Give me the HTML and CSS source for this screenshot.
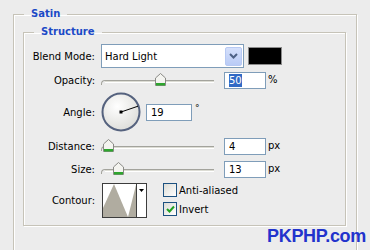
FILE: index.html
```html
<!DOCTYPE html>
<html lang="en">
<head>
    <meta charset="UTF-8">
    <title>Layer Style - Satin</title>
    <link rel="stylesheet" href="styles.css">
</head>
<body>
    <div class="dialog">
        <fieldset class="group outer">
            <legend>Satin</legend>
            <fieldset class="group inner">
                <legend>Structure</legend>

                <div class="row row-blend">
                    <label class="lbl">Blend Mode:</label>
                    <div class="select">
                        <span>Hard Light</span>
                        <span class="drop">
                            <svg width="9" height="6" viewBox="0 0 9 6"><polyline points="1,1 4.5,4.5 8,1" fill="none" stroke="#4d6185" stroke-width="2"/></svg>
                        </span>
                    </div>
                    <div class="swatch"></div>
                </div>

                <div class="row row-opacity">
                    <label class="lbl">Opacity:</label>
                    <div class="slider">
                        <div class="track"></div>
                        <svg class="thumb" style="left: 54px" width="11" height="13" viewBox="0 0 11 13"><path d="M0.5,5 L5.5,0.5 L10.5,5 L10.5,12.5 L0.5,12.5 Z" fill="#f4f4f0" stroke="#8a8a86"/><rect x="1" y="10" width="9" height="2.5" fill="#2ea52e"/></svg>
                    </div>
                    <div class="field"><span class="hilite">50</span></div>
                    <span class="unit">%</span>
                </div>

                <div class="row row-angle">
                    <label class="lbl">Angle:</label>
                    <svg class="dial" width="40" height="40" viewBox="0 0 40 40">
                        <defs>
                            <radialGradient id="dialFill" cx="0.4" cy="0.35" r="0.7">
                                <stop offset="0" stop-color="#ffffff"/>
                                <stop offset="1" stop-color="#dcdcd8"/>
                            </radialGradient>
                        </defs>
                        <circle cx="20" cy="20" r="18.5" fill="url(#dialFill)" stroke="#55627e" stroke-width="2"/>
                        <line x1="20" y1="20" x2="37" y2="14.2" stroke="#000" stroke-width="1"/>
                        <rect x="18.5" y="18.5" width="3" height="3" fill="#000"/>
                    </svg>
                    <div class="field field-angle">19</div>
                    <span class="deg">°</span>
                </div>

                <div class="row row-distance">
                    <label class="lbl">Distance:</label>
                    <div class="slider">
                        <div class="track"></div>
                        <svg class="thumb" style="left: 2px" width="11" height="13" viewBox="0 0 11 13"><path d="M0.5,5 L5.5,0.5 L10.5,5 L10.5,12.5 L0.5,12.5 Z" fill="#f4f4f0" stroke="#8a8a86"/><rect x="1" y="10" width="9" height="2.5" fill="#2ea52e"/></svg>
                    </div>
                    <div class="field">4</div>
                    <span class="unit">px</span>
                </div>

                <div class="row row-size">
                    <label class="lbl">Size:</label>
                    <div class="slider">
                        <div class="track"></div>
                        <svg class="thumb" style="left: 12px" width="11" height="13" viewBox="0 0 11 13"><path d="M0.5,5 L5.5,0.5 L10.5,5 L10.5,12.5 L0.5,12.5 Z" fill="#f4f4f0" stroke="#8a8a86"/><rect x="1" y="10" width="9" height="2.5" fill="#2ea52e"/></svg>
                    </div>
                    <div class="field">13</div>
                    <span class="unit">px</span>
                </div>

                <div class="row row-contour">
                    <label class="lbl">Contour:</label>
                    <div class="contour">
                        <svg class="curve" width="33" height="33" viewBox="0 0 33 33">
                            <rect width="33" height="33" fill="#fff"/>
                            <polygon points="0,33 0,24 11,0 25,33" fill="#b0aca0"/>
                            <polygon points="25,33 33,1 33,33" fill="#b0aca0"/>
                        </svg>
                        <span class="contour-drop">
                            <svg width="5" height="3" viewBox="0 0 5 3"><polygon points="0,0 5,0 2.5,3" fill="#000"/></svg>
                        </span>
                    </div>
                    <div class="checks">
                        <div class="check-row">
                            <span class="box"></span>
                            <span>Anti-aliased</span>
                        </div>
                        <div class="check-row">
                            <span class="box">
                                <svg width="11" height="11" viewBox="0 0 11 11"><polyline points="2,5 4.5,7.5 9,2.5" fill="none" stroke="#21a121" stroke-width="2"/></svg>
                            </span>
                            <span>Invert</span>
                        </div>
                    </div>
                </div>
            </fieldset>
        </fieldset>
        <div class="watermark">PKPHP.com</div>
    </div>
</body>
</html>
```

FILE: styles.css
```css
body {
    margin: 0;
    background: #ececec;
    font-family: 'DejaVu Sans', sans-serif;
    font-size: 10px;
    color: #000;
    overflow: hidden;
}

.dialog {
    position: relative;
    width: 370px;
    height: 250px;
    padding-top: 8px;
    box-sizing: border-box;
    overflow: hidden;
}

.group {
    margin: 0;
    padding: 0;
    border: 1px solid #c6c3b8;
    box-shadow: inset 1px 1px 0 #fff, 1px 1px 0 #fff;
    min-width: 0;
}

.group legend {
    color: #1c4ac6;
    font-weight: bold;
    font-size: 10px;
    margin-left: 10px;
    padding: 0 7px;
    line-height: 12px;
}

.outer {
    margin-left: 13px;
    width: 344px;
    box-sizing: border-box;
    height: 252px;
}

.inner {
    margin: 6px 10px 0 9px;
    padding-bottom: 7px;
}

/* rows */
.row {
    display: flex;
    align-items: center;
}

.lbl {
    width: 71px;
    margin-right: 6px;
    text-align: right;
    flex: none;
}

.row-blend { height: 24px; margin-top: 6px; }
.row-opacity { height: 19px; margin-top: 3px; }
.row-angle { height: 40px; margin-top: 2px; }
.row-distance { height: 19px; margin-top: 5px; }
.row-size { height: 19px; margin-top: 4px; }
.row-contour { height: 35px; margin-top: 4px; }

/* blend mode select */
.select {
    width: 143px;
    height: 24px;
    box-sizing: border-box;
    border: 1px solid #7f9db9;
    background: #fff;
    display: flex;
    align-items: center;
    justify-content: space-between;
    padding: 0 1px 0 3px;
}

.drop {
    width: 17px;
    height: 19px;
    box-sizing: border-box;
    border: 1px solid #b7c9f3;
    border-radius: 2px;
    background: linear-gradient(#d5e0fb, #b9cbf6);
    display: flex;
    align-items: center;
    justify-content: center;
}

.swatch {
    width: 34px;
    height: 18px;
    box-sizing: border-box;
    margin-left: 4px;
    background: #000;
    border: 1px solid #8c8c8c;
}

/* sliders */
.slider {
    position: relative;
    width: 113px;
    height: 19px;
    margin-right: 10px;
}

.track {
    position: absolute;
    left: 4px;
    right: 0;
    top: 9px;
    height: 3px;
    box-sizing: border-box;
    border-top: 1px solid #a3a39c;
    background: #dcdcd4;
    border-bottom: 1px solid #fff;
}

.track::before {
    content: "";
    position: absolute;
    left: -4px;
    top: -1px;
    width: 4px;
    height: 4px;
    border-top: 1px solid #a3a39c;
    border-left: 1px solid #a3a39c;
    border-top-left-radius: 4px;
}

.thumb {
    position: absolute;
    top: 2px;
}

/* number fields */
.field {
    width: 42px;
    height: 17px;
    box-sizing: border-box;
    border: 1px solid #7f9db9;
    background: #fff;
    padding-left: 4px;
    line-height: 15px;
}

.hilite {
    background: #316ac5;
    color: #fff;
    padding: 1px 0;
}

.unit {
    margin-left: 2px;
    align-self: flex-start;
    margin-top: 3px;
}

/* angle */
.dial {
    flex: none;
}

.field-angle {
    width: 46px;
    margin-left: 5px;
}

.deg {
    align-self: flex-start;
    margin-top: 11px;
    margin-left: 3px;
    font-size: 9px;
}

/* contour */
.row-contour .lbl {
    margin-right: 7px;
}

.contour {
    display: flex;
    width: 45px;
    height: 35px;
    box-sizing: border-box;
    border: 1px solid #3c3c3c;
    background: #fff;
}

.curve {
    display: block;
}

.contour-drop {
    flex: 1;
    border-left: 1px solid #3c3c3c;
    display: flex;
    justify-content: center;
    padding-top: 5px;
}

.contour-drop svg {
    display: block;
}

.checks {
    margin-left: 16px;
    display: flex;
    flex-direction: column;
    gap: 5px;
    align-self: flex-start;
}

.check-row {
    display: flex;
    align-items: center;
    gap: 2px;
}

.box {
    width: 14px;
    height: 14px;
    box-sizing: border-box;
    border: 1px solid #1c5180;
    background: linear-gradient(135deg, #dcdcd6, #ffffff);
    display: flex;
    align-items: center;
    justify-content: center;
}

.watermark {
    position: absolute;
    right: 4px;
    bottom: 3px;
    font-family: 'Liberation Sans', Arial, sans-serif;
    font-weight: bold;
    font-size: 18px;
    color: #2233cc;
    letter-spacing: -0.3px;
}
```
